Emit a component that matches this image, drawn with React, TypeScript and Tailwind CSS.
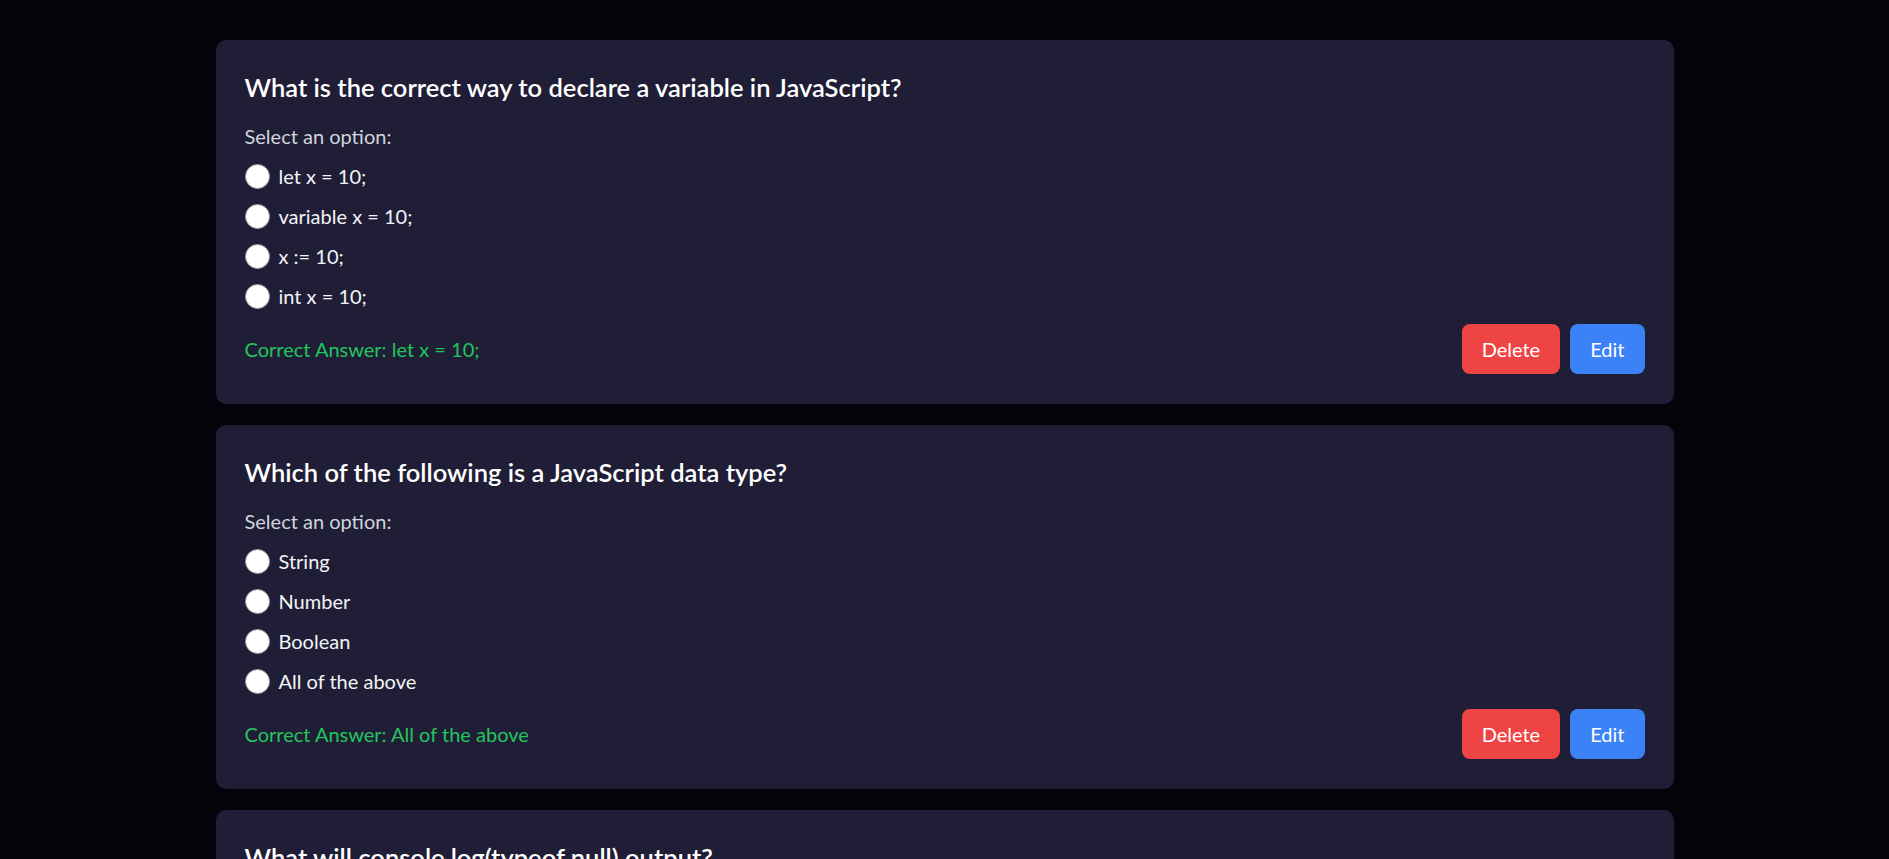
import React from 'react'

type Question = {
  id: number
  question: string
  options: string[]
  answer: string
}

const questions: Question[] = [
  {
    id: 1,
    question: 'What is the correct way to declare a variable in JavaScript?',
    options: ['let x = 10;', 'variable x = 10;', 'x := 10;', 'int x = 10;'],
    answer: 'let x = 10;',
  },
  {
    id: 2,
    question: 'Which of the following is a JavaScript data type?',
    options: ['String', 'Number', 'Boolean', 'All of the above'],
    answer: 'All of the above',
  },
  {
    id: 3,
    question: 'What will console.log(typeof null) output?',
    options: ['"null"', '"object"', '"undefined"', '"number"'],
    answer: '"object"',
  },
]

function QuestionCard({ q }: { q: Question }) {
  return (
    <div className="bg-[#1f1e36] rounded-[10px] px-[29px] pt-[30px] pb-[30px]">
      {/* Question */}
      <h2 className="text-[25.5px] leading-[35px] font-semibold text-white mb-[16px]">
        {q.question}
      </h2>

      <p className="text-[20px] leading-[30px] text-gray-300 mb-[10px]">Select an option:</p>

      {/* Options */}
      <div className="flex flex-col gap-[10px]">
        {q.options.map((opt) => (
          <label key={opt} className="flex items-center gap-[9px] h-[30px] text-[20px] text-gray-100">
            <span className="w-[25px] h-[25px] rounded-full bg-white border border-[#9a9a9a] shrink-0" />
            <span>{opt}</span>
          </label>
        ))}
      </div>

      {/* Footer */}
      <div className="flex items-center justify-between mt-[13px]">
        <p className="text-[20px] leading-[30px] text-[#22c55e]">Correct Answer: {q.answer}</p>
        <div className="flex gap-[10px]">
          <button className="bg-[#ef4444] text-white text-[20px] leading-[30px] px-[20px] py-[10px] rounded-[8px]">
            Delete
          </button>
          <button className="bg-[#3b82f6] text-white text-[20px] leading-[30px] px-[20px] py-[10px] rounded-[8px]">
            Edit
          </button>
        </div>
      </div>
    </div>
  )
}

export default function App() {
  return (
    <div className="min-h-screen bg-[#03030a] pt-[40px] pb-10" style={{ fontFamily: 'Lato, "Noto Sans", sans-serif' }}>
      <div className="w-[1458px] mx-auto flex flex-col gap-[21px]">
        {questions.map((q) => (
          <QuestionCard key={q.id} q={q} />
        ))}
      </div>
    </div>
  )
}
